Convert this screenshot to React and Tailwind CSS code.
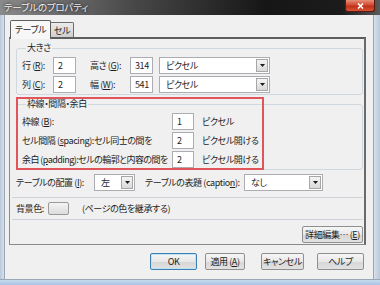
const font = "[font-family:'Noto_Sans_CJK_JP','Noto_Sans',sans-serif] [font-feature-settings:'palt']"

const Arrow = () => (
  <div className="flex h-full w-[12px] items-center justify-center border border-[#a7a7a7] bg-[linear-gradient(#f4f4f4,#d9d9d9)]">
    <svg width="5" height="3" viewBox="0 0 5 3">
      <path d="M0 0h5L2.5 3z" fill="#1a1a1a" />
    </svg>
  </div>
)

const Input = ({ value, w = 'w-[23px]' }) => (
  <div className={`${w} flex h-full items-center border border-[#abadb3] bg-white pl-[4px] text-[#1e1e1e]`}>{value}</div>
)

const Select = ({ value, w }) => (
  <div className={`${w} flex h-full items-center border border-[#abadb3] bg-white pl-[6px] pr-[1px] py-[1px]`}>
    <span className="flex-1 text-[#1e1e1e]">{value}</span>
    <Arrow />
  </div>
)

const Button = ({ children, w, primary }) => (
  <div
    className={`${w} flex h-[17px] items-center justify-center rounded-[2px] border ${
      primary ? 'border-[#3c7fb1] shadow-[inset_0_0_0_1px_#bfe4f8]' : 'border-[#8e8f8f]'
    } bg-[linear-gradient(#f6f6f6,#e8e8e8_50%,#d6d6d6_51%,#e2e2e2)] text-[#1e1e1e]`}
  >
    {children}
  </div>
)

const Group = ({ title, children, className = '' }) => (
  <fieldset className={`rounded-[3px] border border-[#cfd8de] ${className}`}>
    <legend className="ml-[4px] px-[1px] leading-[12px] text-[#1e1e1e]">{title}</legend>
    {children}
  </fieldset>
)

export default function App() {
  return (
    <div className={`${font} flex h-[285px] w-[380px] flex-col overflow-hidden whitespace-nowrap bg-[#c6d5e4] text-[9px] leading-none tracking-[-0.4px] text-[#1e1e1e]`}>
      {/* title bar */}
      <div className="flex h-[15px] shrink-0 items-start bg-[linear-gradient(to_right,#8a8a8a,#484848_35%,#161616_70%,#1b1b1b_90%,#5a5a5a)]">
        <span className="flex-1 pl-[4px] pt-[3px] text-[9.5px] tracking-[-0.2px] text-[#f2f2f2] [text-shadow:0_0_3px_#000]">テーブルのプロパティ</span>
        <div className="mr-[5px] flex h-[12px] w-[30px] items-center justify-center rounded-b-[3px] border border-t-0 border-[#5a1a10] bg-[linear-gradient(#e8907a,#cc4226_50%,#b82c16_51%,#dc5434)]">
          <svg width="7" height="6" viewBox="0 0 7 6">
            <path d="M1 0.5l5 5M6 0.5l-5 5" stroke="#fff" strokeWidth="1.6" />
          </svg>
        </div>
      </div>

      <div className="flex h-[264px] shrink-0">
        <div className="w-[5px] border-r border-[#9aa8b6] bg-[linear-gradient(to_right,#b9c9da,#d6e0ea)]" />

        {/* client */}
        <div className="relative flex w-[368px] flex-col bg-[#f0f0f0]">
          {/* tabs */}
          <div className="ml-[5px] mt-[5px] flex items-end">
            <div className="relative z-10 -mb-[2px] flex h-[19px] w-[41px] items-start justify-center rounded-t-[2px] border border-b-0 border-[#5e5e5e] bg-[#f7f7f7] pt-[4px]">
              テーブル
            </div>
            <div className="flex h-[15px] w-[23px] items-center justify-center rounded-tr-[2px] border border-l-0 border-b-0 border-[#6e6e6e] bg-[linear-gradient(#ebebeb,#cfcfcf)]">
              セル
            </div>
          </div>

          {/* panel */}
          <div className="ml-[4px] flex h-[208px] w-[357px] flex-col border border-[#8a8a8a] border-t-2 border-t-[#5e5e5e] border-r-2 border-r-[#6a6a6a] pl-[6px] pr-[1px]">
            <Group title="大きさ" className="mt-[3px] px-[5px] pb-[1px]">
              <div className="mt-[3px] flex h-[17px] items-center">
                <span className="w-[31px]">行 (<u>R</u>):</span>
                <Input value="2" />
                <span className="ml-[14px] w-[40px]">高さ (<u>G</u>):</span>
                <Input value="314" />
                <Select value="ピクセル" w="ml-[6px] w-[111px]" />
              </div>
              <div className="mt-[2px] flex h-[17px] items-center">
                <span className="w-[31px]">列 (<u>C</u>):</span>
                <Input value="2" />
                <span className="ml-[14px] w-[40px]">幅 (<u>W</u>):</span>
                <Input value="541" />
                <Select value="ピクセル" w="ml-[6px] w-[111px]" />
              </div>
            </Group>

            <Group title="枠線・間隔・余白" className="mt-[3px] px-[5px] pb-[1px]">
              <div className="mt-[3px] flex h-[17px] items-center">
                <span className="w-[150px]">枠線 (<u>B</u>):</span>
                <Input value="1" w="w-[22px]" />
                <span className="ml-[8px]">ピクセル</span>
              </div>
              <div className="mt-[2px] flex h-[17px] items-center">
                <span className="w-[150px]">セル間隔 (<u>s</u>pacing):セル同士の間を</span>
                <Input value="2" w="w-[22px]" />
                <span className="ml-[8px]">ピクセル開ける</span>
              </div>
              <div className="mt-[2px] flex h-[17px] items-center">
                <span className="w-[150px] tracking-[-0.55px]">余白 (<u>p</u>adding):セルの輪郭と内容の間を</span>
                <Input value="2" w="w-[22px]" />
                <span className="ml-[8px]">ピクセル開ける</span>
              </div>
            </Group>

            <div className="mt-[4px] flex h-[17px] items-center">
              <span className="w-[78px]">テーブルの配置 (<u>I</u>):</span>
              <Select value="左" w="w-[41px]" />
              <span className="ml-[10px] w-[99px]">テーブルの表題 (captio<u>n</u>):</span>
              <Select value="なし" w="w-[79px]" />
            </div>

            <div className="-ml-[4px] mt-[6px] flex h-[23px] items-center border-y border-[#cdd3d8] pl-[4px]">
              <span className="w-[32px]">背景色:</span>
              <div className="h-[13px] w-[21px] rounded-[2px] border border-[#9a9a9a] bg-[linear-gradient(#f4f4f4,#dcdcdc)]" />
              <span className="ml-[13px]">(ページの色を継承する)</span>
            </div>

            <div className="mt-[6px] flex justify-end">
              <Button w="w-[61px]">
                詳細編集… (<u>E</u>)
              </Button>
            </div>
          </div>

          {/* dialog buttons */}
          <div className="ml-[145px] mt-[8px] flex">
            <Button w="w-[47px]" primary>OK</Button>
            <div className="ml-[8px]">
              <Button w="w-[40px]">
                適用 (<u>A</u>)
              </Button>
            </div>
            <div className="ml-[16px]">
              <Button w="w-[43px]">キャンセル</Button>
            </div>
            <div className="ml-[13px]">
              <Button w="w-[47px]">ヘルプ</Button>
            </div>
          </div>

          {/* annotation */}
          <div className="pointer-events-none absolute left-[11px] top-[82px] h-[73px] w-[248px] border-2 border-[#e0545c]" />
        </div>

        <div className="w-[7px] border-l border-[#9aa8b6] bg-[linear-gradient(to_right,#d6e0ea,#b9c9da)]" />
      </div>

      <div className="h-[6px] shrink-0 border-t border-[#9aa8b6] bg-[linear-gradient(#c9dbef,#a9c4e2)]" />
    </div>
  )
}
